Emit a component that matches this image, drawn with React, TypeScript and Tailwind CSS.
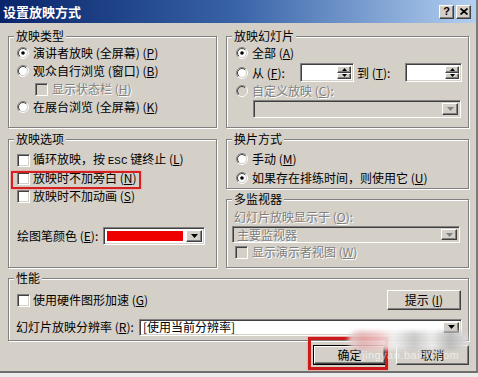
import React from "react";

const SUNKEN =
  "border border-[#808080] border-r-white border-b-white shadow-[inset_1px_1px_0_#404040,inset_-1px_-1px_0_#d4d0c8]";
const RAISED =
  "border border-white border-r-[#404040] border-b-[#404040] shadow-[inset_-1px_-1px_0_#808080]";
const DIS = "text-[#808080] [text-shadow:1px_1px_0_#fff]";

function M({ c }: { c: string }) {
  return (
    <span>
      (<span className="underline underline-offset-[1px]">{c}</span>)
    </span>
  );
}

function Radio({ checked = false, disabled = false }: { checked?: boolean; disabled?: boolean }) {
  return (
    <svg width="12" height="12" viewBox="0 0 12 12" className="shrink-0">
      <defs>
        <linearGradient id="ro" x1="0" y1="0" x2="1" y2="1">
          <stop offset="0.5" stopColor="#808080" />
          <stop offset="0.5" stopColor="#ffffff" />
        </linearGradient>
        <linearGradient id="ri" x1="0" y1="0" x2="1" y2="1">
          <stop offset="0.5" stopColor="#404040" />
          <stop offset="0.5" stopColor="#d4d0c8" />
        </linearGradient>
      </defs>
      <circle cx="6" cy="6" r="5.5" fill="none" stroke="url(#ro)" />
      <circle cx="6" cy="6" r="4.5" fill={disabled ? "#d4d0c8" : "#ffffff"} stroke="url(#ri)" />
      {checked && <circle cx="6" cy="6" r="1.8" fill="#000" />}
    </svg>
  );
}

function Check({ disabled = false }: { disabled?: boolean }) {
  return (
    <div
      className={`w-[13px] h-[13px] shrink-0 ${SUNKEN} ${disabled ? "bg-[#d4d0c8]" : "bg-white"}`}
    />
  );
}

function Arrow({ disabled = false }: { disabled?: boolean }) {
  return (
    <div className={`w-[16px] h-full shrink-0 bg-[#d4d0c8] flex items-center justify-center ${RAISED}`}>
      <svg width="7" height="4" viewBox="0 0 7 4">
        <path d="M0 0H7L3.5 4Z" fill={disabled ? "#808080" : "#000"} />
      </svg>
    </div>
  );
}

function Spin() {
  return (
    <div className="w-[14px] h-full shrink-0 flex flex-col">
      <div className={`flex-1 bg-[#d4d0c8] flex items-center justify-center ${RAISED}`}>
        <svg width="5" height="3" viewBox="0 0 5 3">
          <path d="M0 3H5L2.5 0Z" fill="#000" />
        </svg>
      </div>
      <div className={`flex-1 bg-[#d4d0c8] flex items-center justify-center ${RAISED}`}>
        <svg width="5" height="3" viewBox="0 0 5 3">
          <path d="M0 0H5L2.5 3Z" fill="#000" />
        </svg>
      </div>
    </div>
  );
}

function Group({
  title,
  className,
  children,
}: {
  title: string;
  className: string;
  children?: React.ReactNode;
}) {
  return (
    <fieldset
      className={`m-0 p-0 min-w-0 border border-[#808080] shadow-[inset_1px_1px_0_#fff,1px_1px_0_#fff] ${className}`}
    >
      <legend className="ml-[5px] px-[2px] text-[12px] leading-[14px] bg-[#d4d0c8] text-black">
        {title}
      </legend>
      {children}
    </fieldset>
  );
}

export default function App() {
  return (
    <div className="w-[478px] h-[377px] relative overflow-hidden bg-[#ebebeb] font-['Noto_Sans_CJK_SC','Noto_Sans',sans-serif] text-[12px] leading-[14px] text-black">
      <div className="h-[373px] bg-[#d4d0c8] border-r-2 border-b-2 border-r-[#7a7a7a] border-b-[#6e6e6e] flex flex-col">
        {/* title bar */}
        <div className="h-[23px] shrink-0 bg-gradient-to-r from-[#0a246a] via-[#3a64a8] to-[#b4d0f0] flex items-center justify-between pl-[3px] pr-[5px]">
          <span className="text-white font-bold text-[13px] leading-[16px]">设置放映方式</span>
          <div className="flex gap-[2px]">
            <div className={`w-[15px] h-[14px] bg-[#d4d0c8] flex items-center justify-center ${RAISED}`}>
              <span className="font-['Liberation_Sans',sans-serif] font-bold text-[11px] leading-[11px]">?</span>
            </div>
            <div className={`w-[15px] h-[14px] bg-[#d4d0c8] flex items-center justify-center ${RAISED}`}>
              <svg width="8" height="7" viewBox="0 0 8 7">
                <path d="M0.5 0.5L7.5 6.5M7.5 0.5L0.5 6.5" stroke="#000" strokeWidth="1.7" />
              </svg>
            </div>
          </div>
        </div>

        <div className="pl-[8px] pt-[6px] flex flex-col">
          {/* row 1 */}
          <div className="flex gap-[9px]">
            <Group title="放映类型" className="w-[209px] h-[99px]">
              <div className="pl-[8px] pt-[1px] flex flex-col">
                <div className="h-[18px] flex items-center gap-[4px]">
                  <Radio checked />
                  <span>
                    演讲者放映 (全屏幕) <M c="P" />
                  </span>
                </div>
                <div className="h-[18px] flex items-center gap-[4px]">
                  <Radio />
                  <span>
                    观众自行浏览 (窗口) <M c="B" />
                  </span>
                </div>
                <div className="h-[18px] flex items-center gap-[4px] pl-[18px]">
                  <Check disabled />
                  <span className={DIS}>
                    显示状态栏 <M c="H" />
                  </span>
                </div>
                <div className="h-[18px] flex items-center gap-[4px]">
                  <Radio />
                  <span>
                    在展台浏览 (全屏幕) <M c="K" />
                  </span>
                </div>
              </div>
            </Group>
            <Group title="放映幻灯片" className="w-[243px] h-[99px]">
              <div className="pl-[9px] pt-[1px] flex flex-col">
                <div className="h-[18px] flex items-center gap-[4px]">
                  <Radio checked />
                  <span>
                    全部 <M c="A" />
                  </span>
                </div>
                <div className="h-[21px] flex items-center">
                  <Radio />
                  <span className="ml-[4px] w-[48px]">
                    从 <M c="F" />:
                  </span>
                  <div className={`w-[54px] h-[19px] bg-white flex justify-end p-[2px] ${SUNKEN}`}>
                    <Spin />
                  </div>
                  <span className="ml-[3px] w-[48px]">
                    到 <M c="T" />:
                  </span>
                  <div className={`w-[57px] h-[19px] bg-white flex justify-end p-[2px] ${SUNKEN}`}>
                    <Spin />
                  </div>
                </div>
                <div className="h-[16px] flex items-center gap-[4px]">
                  <Radio disabled />
                  <span className={DIS}>
                    自定义放映 <M c="C" />:
                  </span>
                </div>
                <div
                  className={`ml-[17px] mt-[1px] w-[208px] h-[18px] bg-[#d4d0c8] flex justify-end p-[2px] ${SUNKEN}`}
                >
                  <Arrow disabled />
                </div>
              </div>
            </Group>
          </div>

          {/* row 2 */}
          <div className="flex gap-[9px] mt-[4px]">
            <Group title="放映选项" className="w-[209px] h-[136px]">
              <div className="pl-[8px] pt-[5px] flex flex-col">
                <div className="h-[18px] flex items-center gap-[3px]">
                  <Check />
                  <span>
                    循环放映，按 <span className="font-['Liberation_Mono',monospace] text-[11px]">ESC</span> 键终止{" "}
                    <M c="L" />
                  </span>
                </div>
                <div className="h-[18px] flex items-center gap-[3px]">
                  <Check />
                  <span>
                    放映时不加旁白 <M c="N" />
                  </span>
                </div>
                <div className="h-[18px] flex items-center gap-[3px]">
                  <Check />
                  <span>
                    放映时不加动画 <M c="S" />
                  </span>
                </div>
                <div className="h-[18px] mt-[22px] flex items-center">
                  <span className="w-[86px]">
                    绘图笔颜色 <M c="E" />:
                  </span>
                  <div className={`w-[102px] h-[18px] bg-white flex p-[2px] gap-[2px] ${SUNKEN}`}>
                    <div className="flex-1 p-[1px] bg-white">
                      <div className="h-full bg-[#ee0000]" />
                    </div>
                    <Arrow />
                  </div>
                </div>
              </div>
            </Group>
            <div className="flex flex-col gap-[3px]">
              <Group title="换片方式" className="w-[243px] h-[57px]">
                <div className="pl-[9px] pt-[3px] flex flex-col">
                  <div className="h-[19px] flex items-center gap-[4px]">
                    <Radio />
                    <span>
                      手动 <M c="M" />
                    </span>
                  </div>
                  <div className="h-[19px] flex items-center gap-[4px]">
                    <Radio checked />
                    <span>
                      如果存在排练时间，则使用它 <M c="U" />
                    </span>
                  </div>
                </div>
              </Group>
              <Group title="多监视器" className="w-[243px] h-[76px]">
                <div className="pt-[2px] flex flex-col">
                  <div className="h-[18px] flex items-center pl-[7px]">
                    <span className={DIS}>
                      幻灯片放映显示于 <M c="O" />:
                    </span>
                  </div>
                  <div
                    className={`ml-[5px] w-[228px] h-[17px] bg-[#d4d0c8] flex items-center p-[2px] ${SUNKEN}`}
                  >
                    <span className={`flex-1 pl-[2px] ${DIS}`}>主要监视器</span>
                    <Arrow disabled />
                  </div>
                  <div className="h-[18px] flex items-center gap-[4px] pl-[8px]">
                    <Check disabled />
                    <span className={DIS}>
                      显示演示者视图 <M c="W" />
                    </span>
                  </div>
                </div>
              </Group>
            </div>
          </div>

          {/* performance */}
          <Group title="性能" className="w-[461px] h-[70px] mt-[3px]">
            <div className="pt-[4px] flex flex-col">
              <div className="h-[22px] flex items-center justify-between pl-[8px] pr-[7px]">
                <div className="flex items-center gap-[3px]">
                  <Check />
                  <span>
                    使用硬件图形加速 <M c="G" />
                  </span>
                </div>
                <div className={`w-[74px] h-[20px] bg-[#d4d0c8] flex items-center justify-center ${RAISED}`}>
                  <span>
                    提示 <M c="I" />
                  </span>
                </div>
              </div>
              <div className="h-[18px] mt-[7px] flex items-center pl-[7px]">
                <span className="w-[123px]">
                  幻灯片放映分辨率 <M c="R" />:
                </span>
                <div className={`w-[323px] h-[17px] bg-white flex items-center p-[2px] ${SUNKEN}`}>
                  <span className="flex-1 pl-[1px]">[使用当前分辨率]</span>
                  <Arrow />
                </div>
              </div>
            </div>
          </Group>

          {/* buttons */}
          <div className="w-[461px] flex justify-end gap-[10px] mt-[4px]">
            <div className="w-[73px] h-[20px] border border-black bg-[#d4d0c8]">
              <div className={`w-full h-full flex items-center justify-center ${RAISED}`}>确定</div>
            </div>
            <div className={`w-[73px] h-[20px] bg-[#d4d0c8] flex items-center justify-center ${RAISED}`}>
              取消
            </div>
          </div>
        </div>
      </div>

      {/* annotation highlights */}
      <div className="absolute left-[11px] top-[171px] w-[130px] h-[18px] border-2 border-[#d42020] shadow-[0_0_2px_#ff8080]" />
      <div className="absolute left-[308px] top-[337px] w-[80px] h-[33px] border-[3px] border-[#cc1a1a] shadow-[0_0_2px_#ff8080]" />

      {/* watermark */}
      <div className="absolute left-[348px] top-[331px] w-[120px] h-[19px] rounded-full blur-[2px] opacity-90 bg-[linear-gradient(90deg,#e8d8d8_0%,#e4b4b4_12%,#f0c8c8_25%,#f2f2f2_38%,#c8c8c8_55%,#eeeeee_70%,#b8b8b8_85%,#e0e0e0_100%)]" />
      <div className="absolute left-[362px] top-[349px] text-[11px] leading-[12px] text-white/60 font-['Liberation_Sans',sans-serif] tracking-[0.5px]">
        jingyan.baidu.com
      </div>
    </div>
  );
}
